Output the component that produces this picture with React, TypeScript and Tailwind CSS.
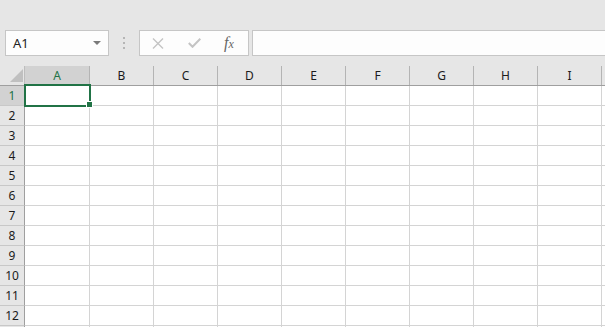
import React from 'react';

const cols = ['A', 'B', 'C', 'D', 'E', 'F', 'G', 'H', 'I'];
const rows = [1, 2, 3, 4, 5, 6, 7, 8, 9, 10, 11, 12, 13];

const App: React.FC = () => {
  return (
    <div className="w-[605px] h-[327px] overflow-hidden bg-[#e6e6e6] relative" style={{ fontFamily: '"Noto Sans", "Open Sans", sans-serif' }}>
      {/* ribbon gap */}
      <div className="h-[30px]" />

      {/* formula bar */}
      <div className="flex h-[26px] items-stretch">
        <div className="ml-[5px] w-[104px] border border-[#c6c6c6] bg-[#fdfdfd] flex items-center justify-between pl-[7px] pr-[7px]">
          <span className="text-[13px] text-[#222] leading-none">A1</span>
          <svg width="8" height="4" viewBox="0 0 8 4">
            <path d="M0 0 L8 0 L4 4 Z" fill="#7a7a7a" />
          </svg>
        </div>
        <div className="w-[30px] flex flex-col items-center justify-center gap-[3px]">
          <div className="w-[2px] h-[2px] bg-[#b5b5b5]" />
          <div className="w-[2px] h-[2px] bg-[#b5b5b5]" />
          <div className="w-[2px] h-[2px] bg-[#b5b5b5]" />
        </div>
        <div className="w-[110px] border border-[#c6c6c6] bg-[#fdfdfd] flex items-center">
          <svg className="ml-[12px]" width="12" height="11" viewBox="0 0 12 11">
            <path d="M1 0.5 L11 10.5 M11 0.5 L1 10.5" stroke="#c4c4c4" strokeWidth="1.4" />
          </svg>
          <svg className="ml-[24px]" width="13" height="10" viewBox="0 0 13 10">
            <path d="M0.8 5 L4.5 8.8 L12.3 0.8" stroke="#c4c4c4" strokeWidth="2" fill="none" />
          </svg>
          <span className="ml-[23px] text-[16px] italic text-[#666] leading-none" style={{ fontFamily: '"Liberation Serif", serif' }}>
            f<span className="text-[12px]">x</span>
          </span>
        </div>
        <div className="ml-[3px] flex-1 border-y border-l border-[#c6c6c6] bg-[#fdfdfd]" />
      </div>

      <div className="h-[10px]" />

      {/* sheet */}
      <div className="bg-white">
        {/* column headers */}
        <div className="flex h-[20px] bg-[#e6e6e6] border-b border-[#9f9f9f]">
          <div className="w-[25px] shrink-0 border-r border-[#bdbdbd] relative">
            <svg className="absolute left-[10px] top-[3px]" width="13" height="13" viewBox="0 0 13 13">
              <path d="M13 0 L13 13 L0 13 Z" fill="#c0c0c0" />
            </svg>
          </div>
          {cols.map((c, i) => (
            <div
              key={c}
              className={`${i === 0 ? 'w-[65px] bg-[#d2d2d2] text-[#217346]' : 'w-[64px] text-[#1b1b1b]'} shrink-0 border-r border-[#b4b4b4] flex items-center justify-center text-[12px]`}
            >
              {c}
            </div>
          ))}
          <div className="flex-1" />
        </div>

        {rows.map(r => (
          <div key={r} className="flex h-[20px] border-b border-[#d4d4d4]">
            <div
              className={`w-[25px] shrink-0 border-r border-r-[#9f9f9f] border-b border-b-[#c8c8c8] -mb-px flex items-center justify-center text-[12px] ${r === 1 ? 'bg-[#d2d2d2] text-[#217346]' : 'bg-[#e6e6e6] text-[#1b1b1b]'}`}
            >
              {r < 13 ? r : ''}
            </div>
            {cols.map((c, i) => (
              <div key={c} className={`${i === 0 ? 'w-[65px]' : 'w-[64px]'} shrink-0 border-r border-[#d4d4d4]`} />
            ))}
            <div className="flex-1" />
          </div>
        ))}
      </div>

      {/* active cell selection */}
      <div className="absolute left-[24px] top-[84px] w-[67px] h-[23px] border-2 border-[#217346]" />
      <div className="absolute left-[86px] top-[101px] w-[7px] h-[7px] bg-white" />
      <div className="absolute left-[87px] top-[102px] w-[5px] h-[5px] bg-[#217346]" />
    </div>
  );
};

export default App;
